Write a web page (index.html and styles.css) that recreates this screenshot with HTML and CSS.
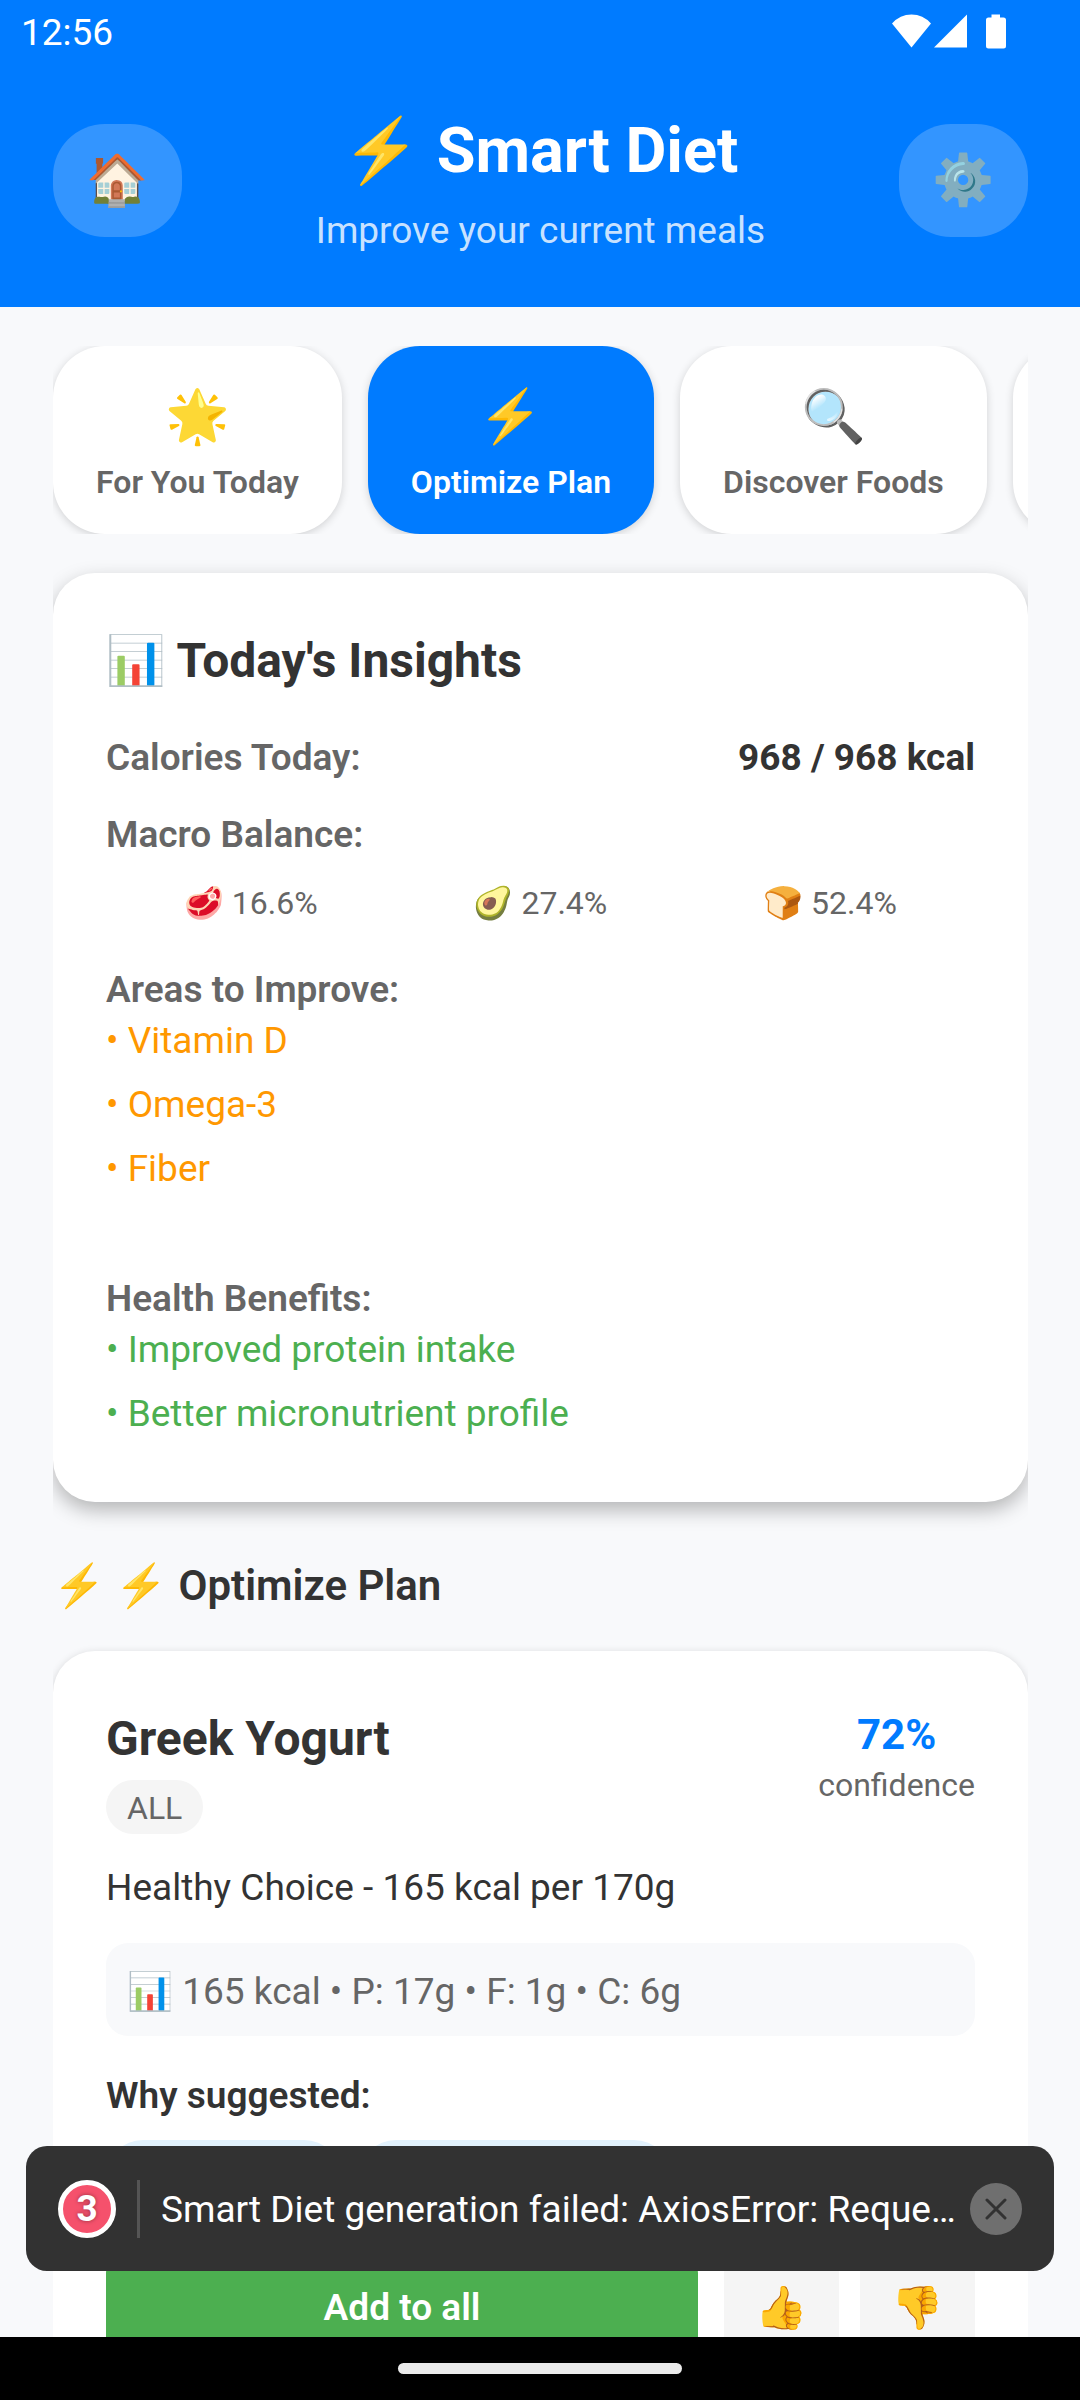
FILE: index.html
```html
<!DOCTYPE html>
<html lang="en">
<head>
<meta charset="utf-8">
<meta name="viewport" content="width=device-width, initial-scale=1">
<title>Smart Diet</title>
<link rel="stylesheet" href="styles.css">
</head>
<body>
<div class="screen">
  <header class="header">
    <div class="status">
      <span>12:56</span>
      <svg class="status-icons" width="114" height="36" viewBox="0 0 114 36" aria-hidden="true">
        <path fill="#fff" d="M0 9.500Q8 .500 19.500 .500T39 9.500L19.500 33.500zM42 33.500 75 .500V33.500zM99.500 3.500V.500H108v3h3.500q2.500 0 2.500 2.500V32q0 2.500-2.500 2.500H96.500q-2.500 0-2.500-2.500V6q0-2.500 2.500-2.500z"/>
      </svg>
    </div>
    <div class="header-bar">
      <button class="round-btn" aria-label="Home">🏠</button>
      <div class="heading">
        <h1>⚡ Smart Diet</h1>
        <p>Improve your current meals</p>
      </div>
      <button class="round-btn" aria-label="Settings">⚙️</button>
    </div>
  </header>

  <main class="content">
    <nav class="tabs">
      <button class="tab"><span class="tab-icon">🌟</span>For You Today</button>
      <button class="tab tab-active"><span class="tab-icon">⚡</span>Optimize Plan</button>
      <button class="tab"><span class="tab-icon">🔍</span>Discover Foods</button>
      <button class="tab tab-next" aria-label="More"></button>
    </nav>

    <section class="card insights">
      <h2>📊 Today's Insights</h2>
      <div class="row"><span class="label">Calories Today:</span><b>968 / 968 kcal</b></div>
      <h3 class="label">Macro Balance:</h3>
      <div class="macros"><span>🥩 16.6%</span><span>🥑 27.4%</span><span>🍞 52.4%</span></div>
      <h3 class="label">Areas to Improve:</h3>
      <ul class="list list-warn"><li>• Vitamin D</li><li>• Omega-3</li><li>• Fiber</li></ul>
      <h3 class="label">Health Benefits:</h3>
      <ul class="list list-good"><li>• Improved protein intake</li><li>• Better micronutrient profile</li></ul>
    </section>

    <h2 class="section-title">⚡ ⚡ Optimize Plan</h2>

    <article class="card food">
      <div class="food-head">
        <div>
          <h2>Greek Yogurt</h2>
          <span class="badge">ALL</span>
        </div>
        <div class="confidence"><strong>72%</strong><span>confidence</span></div>
      </div>
      <p class="desc">Healthy Choice - 165 kcal per 170g</p>
      <p class="facts">📊 165 kcal • P: 17g • F: 1g • C: 6g</p>
      <h3>Why suggested:</h3>
      <div class="chips"><span class="chip"></span><span class="chip chip-wide"></span></div>
      <div class="actions">
        <button class="add">Add to all</button>
        <button class="vote" aria-label="Like">👍</button>
        <button class="vote" aria-label="Dislike">👎</button>
      </div>
    </article>
  </main>

  <div class="toast" role="alert">
    <span class="count">3</span>
    <span class="divider"></span>
    <span class="message">Smart Diet generation failed: AxiosError: Reque…</span>
    <button class="close" aria-label="Dismiss">
      <svg width="22" height="22" viewBox="0 0 22 22"><path d="M2 2 20 20M20 2 2 20" stroke="#323232" stroke-width="3" stroke-linecap="round"/></svg>
    </button>
  </div>

  <footer class="gesture"><span></span></footer>
</div>
</body>
</html>
```
FILE: styles.css
```css
* { box-sizing: border-box; margin: 0; padding: 0; }

body {
  font: 37px/44px Roboto, "Noto Color Emoji", sans-serif;
  color: #333;
  background: #f8f9fb;
}

button { font: inherit; color: inherit; border: 0; }
ul { list-style: none; }

.screen {
  display: flex;
  flex-direction: column;
  height: 100vh;
  position: relative;
  overflow: hidden;
}

/* Header */
.header { flex: none; background: #007bff; color: #fff; }
.status {
  display: flex;
  justify-content: space-between;
  height: 63px;
  padding: 11px 74px 0 21px;
}
.status-icons { margin-top: 3px; }
.header-bar {
  display: flex;
  align-items: center;
  justify-content: space-between;
  padding: 44px 52px 54px 53px;
}
.round-btn {
  width: 129px;
  height: 113px;
  border-radius: 52px;
  background: rgba(255, 255, 255, .2);
  font-size: 50px;
}
.heading { text-align: center; }
.heading h1 { font-size: 63px; line-height: 88px; margin-bottom: 14px; }
.heading p { color: rgba(255, 255, 255, .8); }

/* Scrolling content */
.content {
  flex: 1;
  min-height: 0;
  margin: 0 52px 0 53px;
  padding-top: 39px;
  overflow: hidden;
}

.tabs { display: flex; gap: 26px; overflow: hidden; }
.tab {
  flex: none;
  display: flex;
  flex-direction: column;
  align-items: center;
  gap: 8px;
  padding: 33px 43px;
  border-radius: 52px;
  background: #fff;
  color: #666;
  font-size: 32px;
  font-weight: 600;
  line-height: 38px;
  box-shadow: 0 2px 8px rgba(0, 0, 0, .16);
}
.tab-icon { font-size: 52px; line-height: 76px; font-weight: 400; }
.tab-active { background: #007bff; color: #fff; }
.tab-next { width: 260px; }

.card {
  margin-top: 39px;
  padding: 53px;
  border-radius: 42px;
  background: #fff;
}
.card h2 { font-size: 48px; line-height: 70px; }
.card h3 { font-size: 37px; font-weight: 600; }
.label { color: #666; font-weight: 600; }

.insights {
  padding-bottom: 66px;
  box-shadow: 0 8px 20px rgba(0, 0, 0, .28);
}
.row { display: flex; justify-content: space-between; margin: 40px 0 33px; }
.macros {
  display: flex;
  justify-content: space-around;
  margin: 27px 0 46px;
  font-size: 32px;
  line-height: 38px;
  color: #666;
}
.list { display: grid; gap: 20px; margin-top: 7px; }
.list-warn { color: #ff9800; margin-bottom: 86px; }
.list-good { color: #4caf50; }

.section-title { margin-top: 59px; font-size: 42px; font-weight: 600; line-height: 50px; }

/* Food card */
.food { margin-top: 40px; box-shadow: 0 2px 8px rgba(0, 0, 0, .16); }
.food-head { display: flex; justify-content: space-between; }
.badge {
  display: block;
  width: max-content;
  margin-top: 6px;
  padding: 9px 21px 7px;
  border-radius: 27px;
  background: #f5f5f5;
  color: #666;
  font-size: 32px;
  line-height: 38px;
}
.confidence {
  display: flex;
  flex-direction: column;
  align-items: center;
  color: #666;
  font-size: 32px;
  line-height: 38px;
}
.confidence strong { color: #007bff; font-size: 42px; line-height: 62px; }
.desc { margin: 32px 0 33px; }
.facts {
  margin-bottom: 38px;
  padding: 27px 21px 22px;
  border-radius: 22px;
  background: #f8f9fb;
  color: #666;
}
.chips { display: flex; gap: 18px; margin: 22px 0 38px; }
.chip { width: 235px; height: 74px; border-radius: 37px; background: #e3f2fd; }
.chip-wide { width: 312px; }
.actions { display: flex; gap: 21px; height: 110px; }
.actions button { padding-top: 2px; border-radius: 21px; }
.actions .add {
  flex: 1;
  margin-right: 5px;
  background: #4caf50;
  color: #fff;
  font-weight: 600;
}
.actions .vote { width: 115px; background: #f5f5f5; font-size: 42px; }

/* Toast over the content */
.toast {
  position: absolute;
  left: 26px;
  right: 26px;
  bottom: 129px;
  display: flex;
  align-items: center;
  height: 125px;
  padding: 0 32px;
  border-radius: 21px;
  background: #323232;
  color: #fff;
}
.count {
  flex: none;
  width: 58px;
  height: 58px;
  border: 5px solid #fff;
  border-radius: 50%;
  background: #f5516c;
  font-weight: 700;
  line-height: 48px;
  text-align: center;
  text-shadow: 0 0 4px rgba(0, 0, 0, .4);
}
.divider { flex: none; width: 3px; height: 58px; margin: 0 21px; background: #555; }
.message {
  flex: 1;
  padding-top: 2px;
  white-space: nowrap;
}
.close {
  flex: none;
  display: grid;
  place-items: center;
  width: 52px;
  height: 52px;
  border-radius: 50%;
  background: #6f6f6f;
}

.gesture {
  flex: none;
  display: flex;
  justify-content: center;
  height: 63px;
  padding-top: 26px;
  background: #000;
}
.gesture span { width: 284px; height: 11px; border-radius: 6px; background: #ebebeb; }
```
